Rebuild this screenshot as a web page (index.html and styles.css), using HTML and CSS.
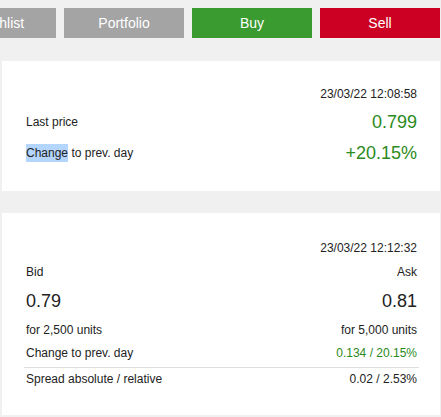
FILE: index.html
```html
<!DOCTYPE html>
<html>
<head>
<meta charset="utf-8">
<link rel="stylesheet" href="styles.css">
</head>
<body>
<div class="page">
  <div class="actions">
    <div class="btn btn-gray">Watchlist</div>
    <div class="btn btn-gray">Portfolio</div>
    <div class="btn btn-buy">Buy</div>
    <div class="btn btn-sell">Sell</div>
  </div>

  <div class="card card-price">
    <div class="stamp">23/03/22 12:08:58</div>
    <div class="kv first">
      <span class="label">Last price</span>
      <span class="big green">0.799</span>
    </div>
    <div class="kv">
      <span class="label"><span class="sel">Change</span> to prev. day</span>
      <span class="big green">+20.15%</span>
    </div>
  </div>

  <div class="card card-quote">
    <div class="stamp">23/03/22 12:12:32</div>
    <div class="row labels">
      <span>Bid</span>
      <span>Ask</span>
    </div>
    <div class="row quotes">
      <span>0.79</span>
      <span>0.81</span>
    </div>
    <div class="row units">
      <span>for 2,500 units</span>
      <span>for 5,000 units</span>
    </div>
    <div class="row change">
      <span>Change to prev. day</span>
      <span class="green">0.134 / 20.15%</span>
    </div>
    <div class="row spread">
      <span>Spread absolute / relative</span>
      <span>0.02 / 2.53%</span>
    </div>
  </div>
</div>
</body>
</html>
```

FILE: styles.css
```css
html, body {
  margin: 0;
  padding: 0;
  background: #f0f0f0;
}

body {
  font-family: "Liberation Sans", Arial, Helvetica, sans-serif;
  color: #222;
  font-size: 12px;
  line-height: 18px;
  overflow: hidden;
}

.page {
  width: 438px;
  margin-left: 2px;
  padding-top: 8px;
}

.actions {
  display: flex;
  justify-content: flex-end;
  gap: 8px;
}

.btn {
  flex: 0 0 120px;
  height: 30px;
  display: flex;
  align-items: center;
  justify-content: center;
  color: #fff;
  font-size: 14px;
  line-height: 16px;
}

.btn-gray { background: #a4a4a4; }
.btn-buy { background: #3a9b30; }
.btn-sell { background: #cc0022; }

.card {
  background: #fff;
  padding: 24px 21px 26px 22px;
}

.card-price {
  margin-top: 23px;
}

.card-quote {
  margin-top: 22px;
  padding-top: 26px;
  padding-bottom: 27px;
}

.stamp {
  text-align: right;
  padding: 0 2px;
}

.kv {
  display: flex;
  justify-content: space-between;
  align-items: center;
  height: 24px;
  margin-top: 7px;
  padding: 0 2px;
}

.kv.first {
  margin-top: 7px;
}

.big {
  font-size: 18px;
  line-height: 24px;
}

.green {
  color: #2b8a22;
}

.sel {
  display: inline-block;
  background: #b4d5fe;
}

.row {
  display: flex;
  justify-content: space-between;
  padding: 0 2px;
}

.labels { margin-top: 6px; }

.quotes {
  margin-top: 8px;
  font-size: 18px;
  line-height: 24px;
}

.units { margin-top: 8px; }

.change {
  margin-top: 5px;
  padding-bottom: 5px;
  border-bottom: 1px solid #dedede;
}

.spread {
  padding-top: 2px;
}
```
